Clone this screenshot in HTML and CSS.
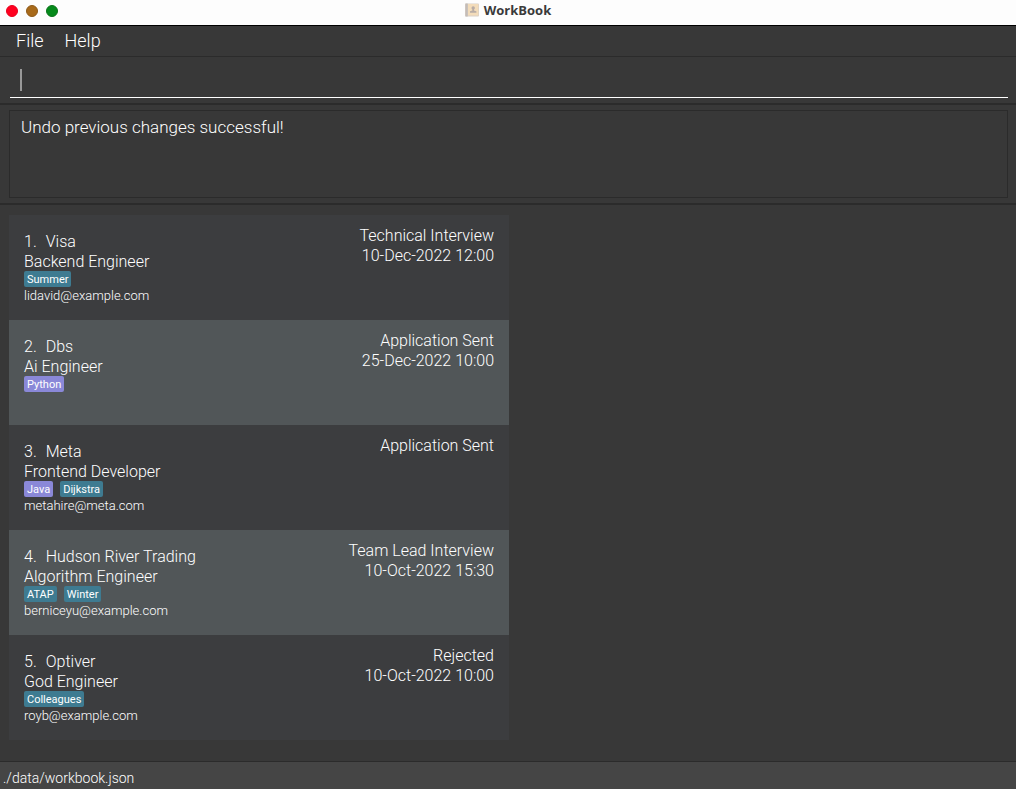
FILE: index.html
```html
<!DOCTYPE html>
<html lang="en">
<head>
<meta charset="utf-8">
<title>WorkBook</title>
<link rel="stylesheet" href="styles.css">
</head>
<body class="window">
  <header class="titlebar">
    <div class="controls">
      <button class="control close" aria-label="Close"></button>
      <button class="control minimize" aria-label="Minimize"></button>
      <button class="control maximize" aria-label="Maximize"></button>
    </div>
    <h1 class="title">
      <svg class="title-icon" viewBox="0 0 14 14" aria-hidden="true">
        <rect x="0" y="0.5" width="14" height="13" rx="1" fill="#d8cfc6"/>
        <rect x="3" y="1" width="10.4" height="11.5" fill="#f3dcba"/>
        <rect x="0.5" y="0.5" width="2.2" height="13" fill="#c3bcb8"/>
        <circle cx="8.2" cy="5" r="1.7" fill="#b8aca6"/>
        <path d="M7.4 6H9v1.600l2.400.6v1.600H5V8.200l2.400-.6z" fill="#b8aca6"/>
      </svg>
      <span>WorkBook</span>
    </h1>
  </header>
  <nav class="menubar">
    <button class="menu">File</button>
    <button class="menu">Help</button>
  </nav>
  <section class="command">
    <div class="command-field">
      <span class="caret"></span>
      <input class="command-input" type="text" aria-label="Command">
    </div>
  </section>
  <section class="result">
    <div class="result-box" role="status">Undo previous changes successful!</div>
  </section>
  <main class="content">
    <ol class="list">
      <li class="card">
        <div class="info">
          <div class="name"><span>1.</span><span>Visa</span></div>
          <div class="role">Backend Engineer</div>
          <div class="tags"><span class="tag">Summer</span></div>
          <div class="email">lidavid@example.com</div>
        </div>
        <div class="stage"><div>Technical Interview</div><div>10-Dec-2022 12:00</div></div>
      </li>
      <li class="card">
        <div class="info">
          <div class="name"><span>2.</span><span>Dbs</span></div>
          <div class="role">Ai Engineer</div>
          <div class="tags"><span class="tag language">Python</span></div>
        </div>
        <div class="stage"><div>Application Sent</div><div>25-Dec-2022 10:00</div></div>
      </li>
      <li class="card">
        <div class="info">
          <div class="name"><span>3.</span><span>Meta</span></div>
          <div class="role">Frontend Developer</div>
          <div class="tags"><span class="tag language">Java</span><span class="tag">Dijkstra</span></div>
          <div class="email">metahire@meta.com</div>
        </div>
        <div class="stage"><div>Application Sent</div></div>
      </li>
      <li class="card">
        <div class="info">
          <div class="name"><span>4.</span><span>Hudson River Trading</span></div>
          <div class="role">Algorithm Engineer</div>
          <div class="tags"><span class="tag">ATAP</span><span class="tag">Winter</span></div>
          <div class="email">berniceyu@example.com</div>
        </div>
        <div class="stage"><div>Team Lead Interview</div><div>10-Oct-2022 15:30</div></div>
      </li>
      <li class="card">
        <div class="info">
          <div class="name"><span>5.</span><span>Optiver</span></div>
          <div class="role">God Engineer</div>
          <div class="tags"><span class="tag">Colleagues</span></div>
          <div class="email">royb@example.com</div>
        </div>
        <div class="stage"><div>Rejected</div><div>10-Oct-2022 10:00</div></div>
      </li>
    </ol>
  </main>
  <footer class="statusbar">./data/workbook.json</footer>
</body>
</html>
```

FILE: styles.css
```css
* {
  box-sizing: border-box;
}

.window {
  display: flex;
  flex-direction: column;
  min-height: 100vh;
  margin: 0;
  background: #383838;
  color: #fff;
  font-family: Roboto, "Liberation Sans", sans-serif;
  font-size: 16px;
  font-weight: 300;
  line-height: 20px;
}

.titlebar {
  display: grid;
  grid-template-columns: 1fr auto 1fr;
  align-items: center;
  height: 26px;
  padding: 0 6px 4px;
  border-bottom: 1px solid #000;
  background: #fdfdfd;
}

.controls {
  display: flex;
  gap: 8px;
}

.control {
  width: 12px;
  height: 12px;
  padding: 0;
  border: 1px solid;
  border-radius: 50%;
}

.close {
  border-color: #e8001c;
  background: #ff001f;
}

.minimize {
  border-color: #8f5a18;
  background: #a86a1a;
}

.maximize {
  border-color: #0a7418;
  background: #058a1b;
}

.title {
  display: flex;
  align-items: center;
  gap: 5px;
  margin: 0;
  padding-bottom: 2px;
  color: #3a3a3a;
  font-family: "Open Sans", sans-serif;
  font-size: 13px;
  font-weight: 700;
  line-height: 18px;
}

.title-icon {
  width: 14px;
  height: 14px;
}

.menubar {
  display: flex;
  gap: 21px;
  padding: 0 16px;
  border-bottom: 1px solid #2b2b2b;
}

.menu {
  padding: 0;
  border: 0;
  background: none;
  color: inherit;
  font: inherit;
  font-size: 18px;
  line-height: 30px;
}

.command {
  padding: 5px 8px 5px 10px;
  border-bottom: 2px solid #2b2b2b;
}

.command-field {
  display: flex;
  align-items: center;
  height: 36px;
  padding: 0 10px;
  border-bottom: 1px solid #fff;
}

.caret {
  width: 2px;
  height: 22px;
  background: #999;
}

.command-input {
  flex: 1;
  padding: 0;
  border: 0;
  outline: 0;
  background: none;
  color: inherit;
  font: inherit;
}

.result {
  padding: 5px 8px 5px 9px;
  border-bottom: 2px solid #2b2b2b;
}

.result-box {
  min-height: 88px;
  padding: 6px 11px;
  border: 1px solid #2b2b2b;
  font-size: 17px;
}

.content {
  flex: 1;
  display: grid;
  grid-template-columns: 1fr 1fr;
  padding: 10px 7px 10px 9px;
}

.list {
  margin: 0;
  padding: 0;
  list-style: none;
}

.card {
  display: flex;
  justify-content: space-between;
  min-height: 105px;
  padding: 11px 15px 9px;
  background: #3c3d3f;
}

.card:nth-child(even) {
  background: #515658;
}

.info {
  padding-top: 6px;
}

.name {
  display: flex;
  gap: 9px;
}

.tags {
  display: flex;
  gap: 7px;
  margin-top: -1px;
}

.tag {
  padding: 1px 3px 0;
  border-radius: 2px;
  background: #3e7b91;
  font-size: 11px;
  font-weight: 400;
  line-height: 15px;
}

.language {
  background: #8a88d8;
}

.email {
  font-size: 13px;
  line-height: 17px;
}

.stage {
  text-align: right;
}

.statusbar {
  padding: 6px 3px 1px;
  border-top: 1px solid #2b2b2b;
  background: #454545;
  font-size: 14px;
}
```
